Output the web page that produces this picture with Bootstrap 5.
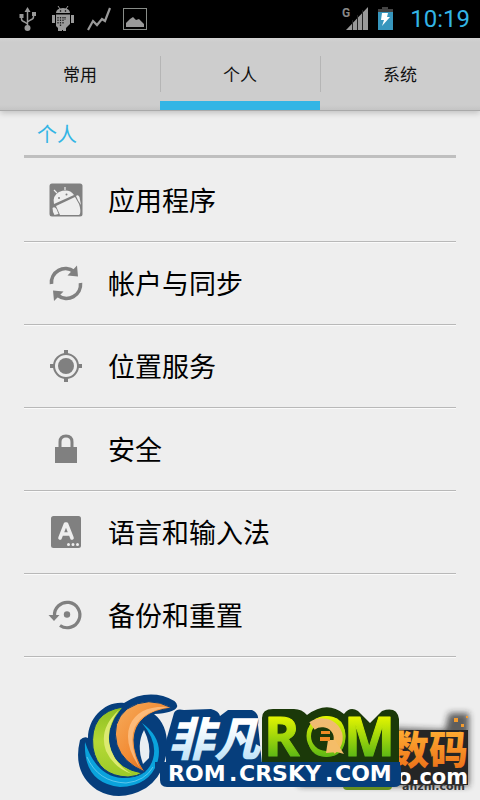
<!DOCTYPE html>
<html lang="zh-CN">
<head>
<meta charset="utf-8">
<meta name="viewport" content="width=device-width, initial-scale=1">
<title>个人</title>
<link href="https://cdn.jsdelivr.net/npm/bootstrap@5.3.0/dist/css/bootstrap.min.css" rel="stylesheet">
<style>
  body { background: #eee; color: #000; font-family: "Noto Sans CJK SC", sans-serif; }
  .status-bar { height: 38px; background: #000; padding: 0 10px 0 16px; }
  .status-bar svg { display: block; }
  .clock { font: 24px/38px Roboto, sans-serif; color: #33b5e5; margin-left: 16px; }
  .tab-strip { height: 73px; background: linear-gradient(#d4d4d4, #cdcdcd 4px, #cdcdcd 67px, #c4c4c4); border-bottom: 1px solid #a9a9a9; box-shadow: 0 2px 6px #0003; }
  .tab-strip .nav-item { position: relative; }
  .tab-strip .nav-item + .nav-item::before { content: ""; position: absolute; left: 0; top: 18px; height: 36px; border-left: 1px solid #b5b5b5; }
  .tab-strip .nav-link { height: 72px; border: 0; border-bottom: 9px solid transparent; border-radius: 0; padding: 9px 0 0; color: #111; font-size: 17px; line-height: 54px; }
  .tab-strip .nav-link.active { border-bottom-color: #33b5e5; color: #111; }
  .settings { padding: 0 24px; }
  .section-title { font-size: 20px; line-height: 46px; height: 47px; color: #33b5e5; padding-left: 13px; border-bottom: 3px solid #bfbfbf; }
  .entries { padding-top: 1px; }
  .entries .entry { height: 83px; padding: 0 0 0 24px; gap: 24px; font-size: 27px; color: #000; background: transparent; border: 0; border-bottom: 1px solid #b8b8b8; box-shadow: 0 1px #fafafa; }
  .entry svg { flex: none; }
  .brand-zh { font: italic 900 46px "Noto Sans CJK SC", sans-serif; }
  .brand-url { font: bold 22px "DejaVu Sans", sans-serif; }
  .brand-rom { font: bold 54px "Open Sans", sans-serif; }
  .partner-zh { font: 900 39px "Noto Sans CJK SC", sans-serif; }
  .partner-url { font: bold 21px "DejaVu Sans", sans-serif; }
  .partner-sub { font: bold 11px "DejaVu Sans", sans-serif; }
</style>
<script src="https://cdn.jsdelivr.net/npm/bootstrap@5.3.0/dist/js/bootstrap.bundle.min.js"></script>
</head>
<body>
<div class="d-flex flex-column min-vh-100">
  <header class="status-bar d-flex align-items-center justify-content-between">
    <svg width="134" height="38" viewBox="16 0 134 38" fill="none" stroke="#999" aria-hidden="true">
      <path d="M27.500 10v18M21.500 16v3q0 2 3 3l3 2M33.500 14v3q0 2-3 3l-3 2" stroke-width="1.500"/>
      <path d="M24.500 12l3-5 3 5zM19.500 14h4v4h-4zM32 12h4v4h-4z" fill="#999" stroke="none"/>
      <circle cx="27.500" cy="28" r="3" fill="#999" stroke="none"/>
      <path d="M56 13q0-4.500 7-5 7 .500 7 5zM52 15h3v8h-3zM71 15h3v8h-3zM56 14.500h14V24l-4 4v3h-3v-1h-1v1h-4v-3l-2-2z" fill="#999" stroke="none"/>
      <path d="M58 6l2 3M68 6l-2 3" />
      <circle cx="60.500" cy="11" r=".8" fill="#000" stroke="none"/><circle cx="65.500" cy="11" r=".8" fill="#000" stroke="none"/>
      <path d="M58 17v7M60.500 17v10M63 17v7M65 17v3" stroke="#222" stroke-width="1.300" stroke-dasharray="1.500 1"/>
      <path d="M88 30l5-9 4 4 5-6 3 2 5-13" stroke-width="2.200"/>
      <rect x="123.500" y="8.500" width="23" height="21" stroke="#888c88"/>
      <path d="M126 27v-4l4-4 3-2 3 3 3-1 5 5v3z" fill="#999" stroke="none"/>
    </svg>
    <div class="d-flex align-items-center">
      <svg width="52" height="38" viewBox="342 0 52 38" aria-hidden="true">
        <text x="342" y="17" font-family="Roboto, sans-serif" font-weight="bold" font-size="12" fill="#888">G</text>
        <path d="M346 30L368 7v23z" fill="#999"/>
        <path d="M352.500 20v10M357.500 15v15M362.500 10v20" stroke="#222" stroke-width="1"/>
        <path d="M382 7h6v2h5v3h-15V9h4z" fill="#444"/>
        <path d="M378 12h15v18h-15z" fill="#3796bd"/>
        <path d="M382 13h6l-1 4h3l-8 9 2-6h-3z" fill="#fff"/>
      </svg>
      <time class="clock">10:19</time>
    </div>
  </header>

  <nav aria-label="设置分类">
    <ul class="nav nav-fill flex-nowrap tab-strip">
      <li class="nav-item w-100"><a class="nav-link" href="#">常用</a></li>
      <li class="nav-item w-100"><a class="nav-link active" aria-current="page" href="#">个人</a></li>
      <li class="nav-item w-100"><a class="nav-link" href="#">系统</a></li>
    </ul>
  </nav>

  <main class="settings">
    <h1 class="section-title fw-normal mb-0">个人</h1>
    <div class="entries list-group rounded-0">
      <a class="entry list-group-item d-flex align-items-center" href="#">
        <svg width="36" height="36" viewBox="0 0 36 36" aria-hidden="true">
          <rect x="1.500" y="1.500" width="33" height="33" rx="2.500" fill="#808080"/>
          <path d="M6 22q-2-8 5-12 10-4 15 3zM8 24l19-9 4 7q2 6 1 10l-1 1H12zM4.500 26q2-2 4 1l2 5-4 1q-2-3-2-7zM28 14q2-2 3.500 1l1.500 8q-3-4-5-9z" fill="#eee"/>
          <path d="M9 11l-3-3M17 8V5" stroke="#eee" stroke-width="1.200"/>
          <circle cx="11" cy="16" r="1" fill="#808080"/><circle cx="18.500" cy="12.500" r="1" fill="#808080"/>
        </svg><span>应用程序</span></a>
      <a class="entry list-group-item d-flex align-items-center" href="#">
        <svg width="36" height="36" viewBox="0 0 36 36" aria-hidden="true">
          <path d="M3.500 19A14 14 0 0 1 26 6.500M32.500 18A14 14 0 0 1 10 30.500" fill="none" stroke="#808080" stroke-width="3.600"/>
          <path d="M29 .500l1 11-10.500-1zM6 36L5 25.500l10.500 1z" fill="#808080"/>
        </svg><span>帐户与同步</span></a>
      <a class="entry list-group-item d-flex align-items-center" href="#">
        <svg width="36" height="36" viewBox="0 0 36 36" aria-hidden="true">
          <circle cx="18" cy="18" r="12" fill="none" stroke="#808080" stroke-width="2"/>
          <circle cx="18" cy="18" r="8" fill="#808080"/>
          <path d="M18 2v5M18 29v5M2 18h5M29 18h5" stroke="#808080" stroke-width="4"/>
        </svg><span>位置服务</span></a>
      <a class="entry list-group-item d-flex align-items-center" href="#">
        <svg width="36" height="36" viewBox="0 0 36 36" aria-hidden="true">
          <path d="M7 16h22v16H7z" fill="#808080"/>
          <path d="M12 17v-6q0-6 6-6t6 6v6" fill="none" stroke="#808080" stroke-width="3"/>
        </svg><span>安全</span></a>
      <a class="entry list-group-item d-flex align-items-center" href="#">
        <svg width="36" height="36" viewBox="0 0 36 36" aria-hidden="true">
          <rect x="3" y="2" width="30" height="32" rx="2.500" fill="#808080"/>
          <path d="M12 24l5.500-14h1L24 24M14 20h8" fill="none" stroke="#eee" stroke-width="3.600" stroke-linecap="round" stroke-linejoin="round"/>
          <path d="M20.500 30.500h0M25 30.500h0M29.500 30.500h0" stroke="#eee" stroke-width="3" stroke-linecap="round"/>
        </svg><span>语言和输入法</span></a>
      <a class="entry list-group-item d-flex align-items-center" href="#">
        <svg width="36" height="36" viewBox="0 0 36 36" aria-hidden="true">
          <path d="M6.500 19A12.700 12.700 0 1 1 12 28.500" fill="none" stroke="#808080" stroke-width="3.200"/>
          <path d="M.500 18h11L6 24z" fill="#808080"/>
          <circle cx="19" cy="17.500" r="3.200" fill="#808080"/>
        </svg><span>备份和重置</span></a>
    </div>
  </main>

  <footer class="mt-auto">
    <svg class="d-block w-100" viewBox="0 0 480 120" role="img" aria-label="非凡ROM ROM.CRSKY.COM">
      <defs>
        <linearGradient id="green" x1="0" y1="0" x2="0" y2="1"><stop offset="0" stop-color="#8cbd22"/><stop offset=".5" stop-color="#b5d935"/><stop offset="1" stop-color="#9bc929"/></linearGradient>
        <linearGradient id="orange" x1="0" y1="0" x2="1" y2="1"><stop offset="0" stop-color="#f6ad5d"/><stop offset=".5" stop-color="#f28b34"/><stop offset="1" stop-color="#c45612"/></linearGradient>
        <linearGradient id="lime" gradientUnits="userSpaceOnUse" x1="0" y1="36" x2="0" y2="76"><stop offset="0" stop-color="#e6f600"/><stop offset="1" stop-color="#5fb814"/></linearGradient>
        <linearGradient id="ice" gradientUnits="userSpaceOnUse" x1="0" y1="45" x2="0" y2="80"><stop offset="0" stop-color="#fff"/><stop offset="1" stop-color="#bfe3f8"/></linearGradient>
        <linearGradient id="gold" gradientUnits="userSpaceOnUse" x1="0" y1="36" x2="0" y2="74"><stop offset="0" stop-color="#eebb78"/><stop offset="1" stop-color="#f8bd55"/></linearGradient>
        <linearGradient id="amber" gradientUnits="userSpaceOnUse" x1="0" y1="50" x2="0" y2="86"><stop offset="0" stop-color="#ffad32"/><stop offset="1" stop-color="#ee761b"/></linearGradient>
        <filter id="soft" x="-20%" y="-20%" width="140%" height="140%"><feGaussianBlur stdDeviation="3"/></filter>
      </defs>

      <!-- partner mark -->
      <path d="M290 92L395 48l50 2 4-17h20v73H300z" fill="#222" opacity=".7" filter="url(#soft)"/>
      <path d="M395 50h73v55h-73z" fill="#252525"/>
      <text class="partner-sub" x="402" y="110" fill="#343434">anzhi.com</text>
      <text class="partner-zh" x="390" y="84" fill="url(#amber)">数码</text>
      <text class="partner-url" x="397" y="104" fill="#fff">o.com</text>
      <path d="M454 38h4v4h-4zM461 44h3v3h-3zM466 36h2v2h-2z" fill="#f39b2e"/>
      <rect x="343" y="100" width="49" height="10" rx="4" fill="#668f22"/>

      <!-- round emblem -->
      <path d="M80 60Q84 56 88 58C88 38 105 21 124 23Q142 11 163 16Q179 21 177 27Q174 33 154 34Q168 45 167 68Q165 95 146 108Q120 123 97 110Q72 93 80 60z" fill="#063e7c"/>
      <path d="M144 50Q151 64 149 78L143 84Q136 65 144 50z" fill="#e9eef2"/>
      <path d="M85 62Q83 103 120 107Q151 106 158 80Q163 58 142 43Q158 62 153 79Q147 99 122 98Q96 96 85 62z" fill="#0aa3dc"/>
      <path d="M87 77Q98 102 126 103Q145 101 153 87" fill="none" stroke="#7dd5f3" stroke-width=".7"/>
      <path d="M123 27Q89 32 93 68Q98 96 128 97Q138 96 142 93Q119 89 112 72Q103 50 123 27z" fill="url(#green)" stroke="#063e7c" stroke-width="1"/>
      <path d="M119 30Q98 49 106 71Q114 88 132 94Q117 86 111 70Q104 50 119 30z" fill="#dcea70"/>
      <path d="M172 28Q148 15 127 29Q111 42 117 65Q123 83 145 92Q134 76 134 60Q135 32 172 28z" fill="url(#orange)" stroke="#063e7c" stroke-width="1"/>
      <path d="M169 27Q139 25 130 45Q123 64 140 88Q128 62 135 47Q143 31 169 27z" fill="#ffc991" opacity=".7"/>

      <!-- lettering -->
      <g stroke-linejoin="round" paint-order="stroke">
        <path d="M174 33Q176 28 184 30L211 29Q219 31 220 36L228 30H252Q260 33 258 45L262 84H166V61z" fill="#063e7c"/>
        <text class="brand-zh" x="168" y="76" fill="url(#ice)">非凡</text>
        <path d="M165 82h228q8 0 8 6v13q0 6-7 6H167q-7 0-7-7V87q0-5 5-5z" fill="#063e7c"/>
        <path d="M262 38Q262 29 273 29H294Q302 29 307 35Q327 20 344 34Q350 26 358 31L370 43L382 31Q397 26 399 39V83H262z" fill="#1b3909"/>
        <text class="brand-rom" y="76" fill="url(#lime)" stroke="url(#lime)" stroke-width="1"><tspan x="264">R</tspan><tspan x="305">O</tspan><tspan x="344">M</tspan></text>
        <circle cx="326" cy="56" r="15" fill="#1b3909" stroke="url(#lime)" stroke-width="9"/>
        <path d="M312 46a16 15 0 1 1 20 24" fill="none" stroke="url(#gold)" stroke-width="9"/>
        <path d="M328 60h7l9 14-7-2-11 1z" fill="#f4bd68"/>
        <path d="M321 51h9v3h-9zM320 57h10v4h-10z" fill="#f08b25"/>
        <path d="M155 82h245v8H155z" fill="#063e7c"/>
        <text class="brand-url" y="101" fill="#fff"><tspan x="168">ROM</tspan><tspan x="229">.</tspan><tspan x="239">CRSKY</tspan><tspan x="325">.</tspan><tspan x="335">COM</tspan></text>
      </g>
    </svg>
  </footer>
</div>
</body>
</html>
